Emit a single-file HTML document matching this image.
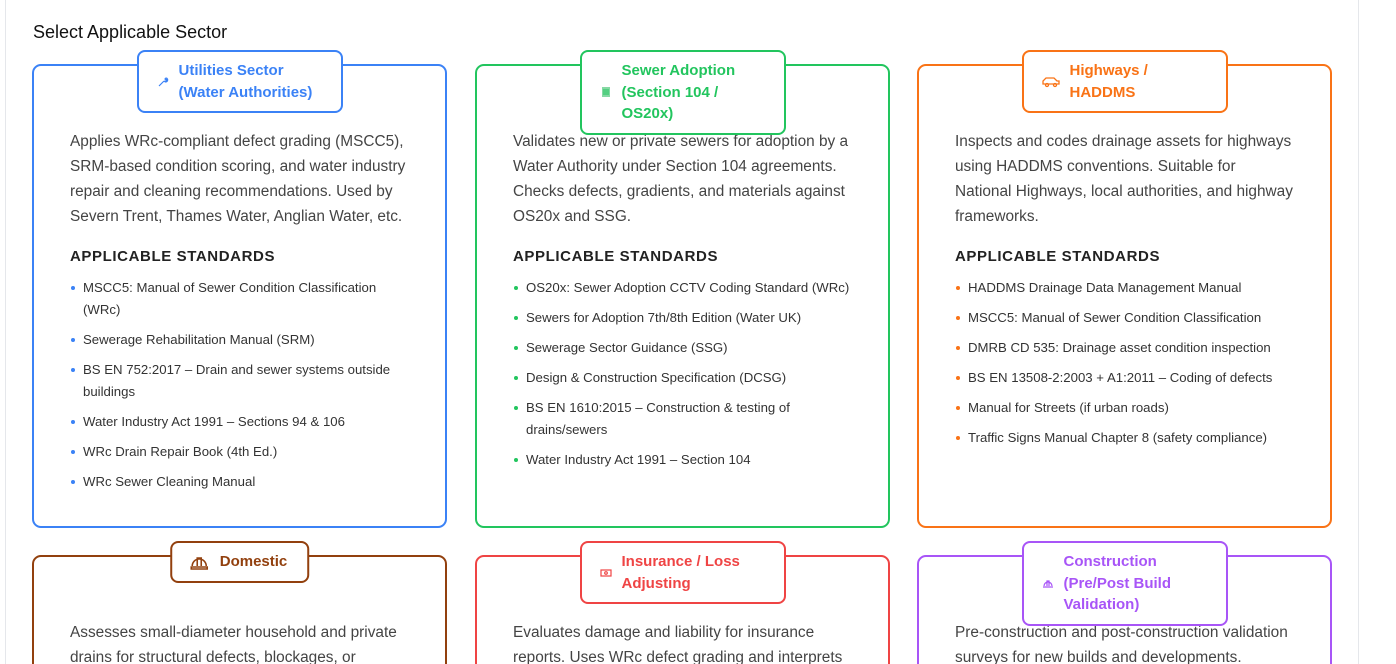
<!DOCTYPE html>
<html><head><meta charset="utf-8"><style>
*{box-sizing:border-box;margin:0;padding:0}
html,body{width:1396px;height:664px;overflow:hidden;background:#fff;font-family:"Liberation Sans",Arial,sans-serif;}
body{position:relative}
.frame{position:absolute;left:5px;top:-10px;width:1354px;height:1200px;border:1px solid #e5e7eb;}
h2{position:absolute;left:33px;top:22px;font-size:18px;font-weight:normal;color:#111;}
.card{position:absolute;width:415px;height:464px;border:2px solid;border-radius:9px;padding:63px 36px 0 36px;}
.badge{position:absolute;top:-16px;left:50%;transform:translateX(-50%);background:#fff;border:2px solid;border-radius:8px;padding:8px 22px 8px 18px;display:flex;align-items:center;font-size:15px;font-weight:bold;line-height:21.5px;white-space:normal}
.badge .ic{width:12px;height:12px;margin-right:10px;flex:none}
.badge.w{width:206px}
p{font-size:15.4px;line-height:25px;color:#444;width:340px}
h4{margin-top:18px;font-size:15px;letter-spacing:0.6px;color:#222;font-weight:bold;line-height:20px}
ul{list-style:none;margin-top:10px}
li{position:relative;padding-left:13px;font-size:13.2px;line-height:22px;color:#333;margin-bottom:8px}
li:before{content:"";position:absolute;left:1px;top:9px;width:4px;height:4px;border-radius:50%;background:var(--c)}
</style></head><body>
<div class="frame"></div>
<h2>Select Applicable Sector</h2>

<div class="card" style="left:32px;top:64px;border-color:#3b82f6;--c:#3b82f6">
<div class="badge w" style="border-color:#3b82f6;color:#3b82f6"><svg class="ic" viewBox="0 0 12 12" fill="none" stroke="#3b82f6" stroke-width="1.2"><path d="M2 10l5-5M7 5a2 2 0 1 0 2-3l-1 1 1 1 1-1a2 2 0 0 1-3 2"/></svg><span>Utilities Sector (Water Authorities)</span></div>
<p>Applies WRc-compliant defect grading (MSCC5), SRM-based condition scoring, and water industry repair and cleaning recommendations. Used by Severn Trent, Thames Water, Anglian Water, etc.</p>
<h4>APPLICABLE STANDARDS</h4>
<ul><li>MSCC5: Manual of Sewer Condition Classification (WRc)</li><li>Sewerage Rehabilitation Manual (SRM)</li><li>BS EN 752:2017 – Drain and sewer systems outside buildings</li><li>Water Industry Act 1991 – Sections 94 &amp; 106</li><li>WRc Drain Repair Book (4th Ed.)</li><li>WRc Sewer Cleaning Manual</li></ul>
</div>

<div class="card" style="left:475px;top:64px;border-color:#22c55e;--c:#22c55e">
<div class="badge w" style="border-color:#22c55e;color:#22c55e"><svg class="ic" viewBox="0 0 12 12"><rect x="2" y="1" width="8" height="10" fill="#86d9a4"/><path d="M4 3v6M6 3v6M8 3v6" stroke="#22c55e"/></svg><span>Sewer Adoption (Section 104 / OS20x)</span></div>
<p>Validates new or private sewers for adoption by a Water Authority under Section 104 agreements. Checks defects, gradients, and materials against OS20x and SSG.</p>
<h4>APPLICABLE STANDARDS</h4>
<ul><li>OS20x: Sewer Adoption CCTV Coding Standard (WRc)</li><li>Sewers for Adoption 7th/8th Edition (Water UK)</li><li>Sewerage Sector Guidance (SSG)</li><li>Design &amp; Construction Specification (DCSG)</li><li>BS EN 1610:2015 – Construction &amp; testing of drains/sewers</li><li>Water Industry Act 1991 – Section 104</li></ul>
</div>

<div class="card" style="left:917px;top:64px;border-color:#f97316;--c:#f97316">
<div class="badge w" style="border-color:#f97316;color:#f97316"><svg class="ic" style="width:18px;margin-right:10px" viewBox="0 0 18 12" fill="none" stroke="#f97316" stroke-width="1.3"><path d="M1 8V5l3-3h8l3 3h2v3H1z"/><circle cx="5" cy="9" r="1.5"/><circle cx="13" cy="9" r="1.5"/></svg><span>Highways / HADDMS</span></div>
<p>Inspects and codes drainage assets for highways using HADDMS conventions. Suitable for National Highways, local authorities, and highway frameworks.</p>
<h4>APPLICABLE STANDARDS</h4>
<ul><li>HADDMS Drainage Data Management Manual</li><li>MSCC5: Manual of Sewer Condition Classification</li><li>DMRB CD 535: Drainage asset condition inspection</li><li>BS EN 13508-2:2003 + A1:2011 – Coding of defects</li><li>Manual for Streets (if urban roads)</li><li>Traffic Signs Manual Chapter 8 (safety compliance)</li></ul>
</div>

<div class="card" style="left:32px;top:555px;border-color:#92400e;--c:#92400e">
<div class="badge" style="border-color:#92400e;color:#92400e;padding:8px 20px 8px 18px"><svg class="ic" style="width:18px;height:16px;margin-right:12px" viewBox="0 0 18 16" fill="none" stroke="#92400e" stroke-width="1.6"><path d="M2 12a7 7 0 0 1 14 0M7 12V4h4v8M1 13h16v2H1z"/></svg><span>Domestic</span></div>
<p>Assesses small-diameter household and private drains for structural defects, blockages, or</p>
</div>

<div class="card" style="left:475px;top:555px;border-color:#ef4444;--c:#ef4444">
<div class="badge w" style="border-color:#ef4444;color:#ef4444"><svg class="ic" viewBox="0 0 12 12" fill="none" stroke="#ef4444" stroke-width="1.2"><rect x="1" y="3" width="10" height="6"/><circle cx="6" cy="6" r="1.3"/></svg><span>Insurance / Loss Adjusting</span></div>
<p>Evaluates damage and liability for insurance reports. Uses WRc defect grading and interprets</p>
</div>

<div class="card" style="left:917px;top:555px;border-color:#a855f7;--c:#a855f7">
<div class="badge w" style="border-color:#a855f7;color:#a855f7"><svg class="ic" viewBox="0 0 12 12" fill="none" stroke="#a855f7" stroke-width="1.2"><path d="M2 9a4 4 0 0 1 8 0M5 9V4h2v5M1 10h10"/></svg><span>Construction (Pre/Post Build Validation)</span></div>
<p>Pre-construction and post-construction validation surveys for new builds and developments.</p>
</div>
</body></html>
